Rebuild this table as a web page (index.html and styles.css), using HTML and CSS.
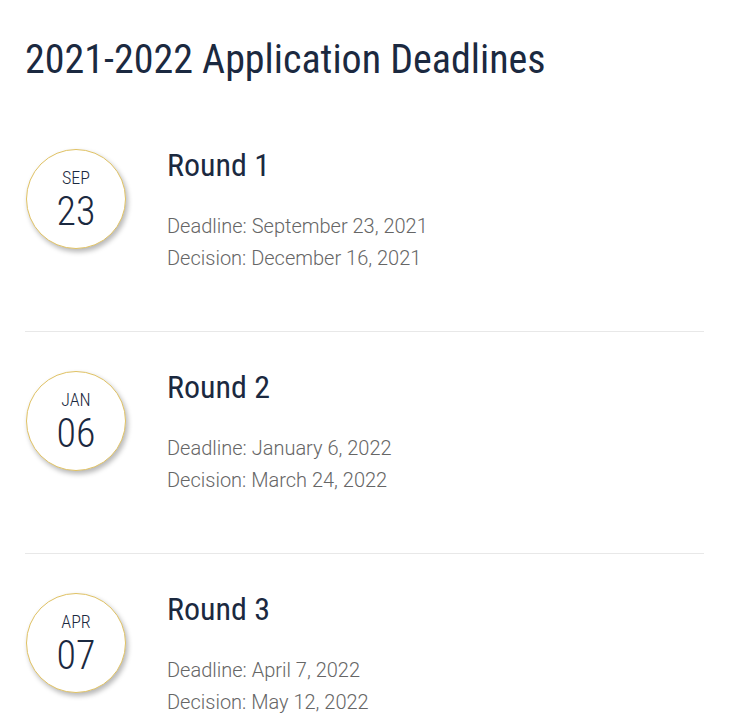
FILE: index.html
```html
<!DOCTYPE html>
<html lang="en">
<head>
<meta charset="utf-8">
<title>2021-2022 Application Deadlines</title>
<link rel="stylesheet" href="styles.css">
</head>
<body>
<main class="page">
  <h1 class="title">2021-2022 Application Deadlines</h1>
  <ul class="rounds">
    <li class="round">
      <div class="date"><span class="month">SEP</span><span class="day">23</span></div>
      <div class="info">
        <h2 class="round-name">Round 1</h2>
        <p class="line">Deadline: September 23, 2021</p>
        <p class="line">Decision: December 16, 2021</p>
      </div>
    </li>
    <li class="round">
      <div class="date"><span class="month">JAN</span><span class="day">06</span></div>
      <div class="info">
        <h2 class="round-name">Round 2</h2>
        <p class="line">Deadline: January 6, 2022</p>
        <p class="line">Decision: March 24, 2022</p>
      </div>
    </li>
    <li class="round">
      <div class="date"><span class="month">APR</span><span class="day">07</span></div>
      <div class="info">
        <h2 class="round-name">Round 3</h2>
        <p class="line">Deadline: April 7, 2022</p>
        <p class="line">Decision: May 12, 2022</p>
      </div>
    </li>
  </ul>
</main>
</body>
</html>
```
FILE: styles.css
```css
html, body {
  margin: 0;
  padding: 0;
  background: #ffffff;
}
.page {
  width: 679px;
  padding: 36px 0 0 25px;
  font-family: "Roboto", "Liberation Sans", sans-serif;
}
.title {
  margin: 0;
  font-family: "Roboto Condensed", "Roboto", sans-serif;
  font-stretch: condensed;
  font-weight: 400;
  font-size: 40px;
  line-height: 48px;
  color: #1b2940;
}
.rounds {
  list-style: none;
  margin: 61px 0 0;
  padding: 0;
}
.round {
  display: flex;
  gap: 41px;
  padding-bottom: 57px;
  border-bottom: 1px solid #e8e8e8;
  margin-bottom: 35px;
}
.round:last-child {
  border-bottom: none;
}
.date {
  flex: none;
  box-sizing: border-box;
  width: 100px;
  height: 100px;
  margin: 4px 0 0 1px;
  padding-top: 4px;
  border: 1.5px solid #e0c264;
  border-radius: 50%;
  background: #fff;
  box-shadow: 2px 3px 5px rgba(0, 0, 0, 0.28);
  display: flex;
  flex-direction: column;
  align-items: center;
  justify-content: center;
  color: #1b2940;
  font-family: "Roboto Condensed", "Roboto", sans-serif;
  font-stretch: condensed;
  font-weight: 300;
}
.month {
  font-size: 18px;
  line-height: 22px;
}
.day {
  font-size: 40px;
  line-height: 46px;
}
.info {
  flex: 1;
}
.round-name {
  margin: 0 0 25px;
  padding-top: 1px;
  font-family: "Roboto Condensed", "Roboto", sans-serif;
  font-stretch: condensed;
  font-weight: 400;
  font-size: 32px;
  line-height: 39px;
  color: #1b2940;
}
.line {
  margin: 0;
  font-size: 20px;
  line-height: 32px;
  font-weight: 300;
  color: #666666;
}
```
